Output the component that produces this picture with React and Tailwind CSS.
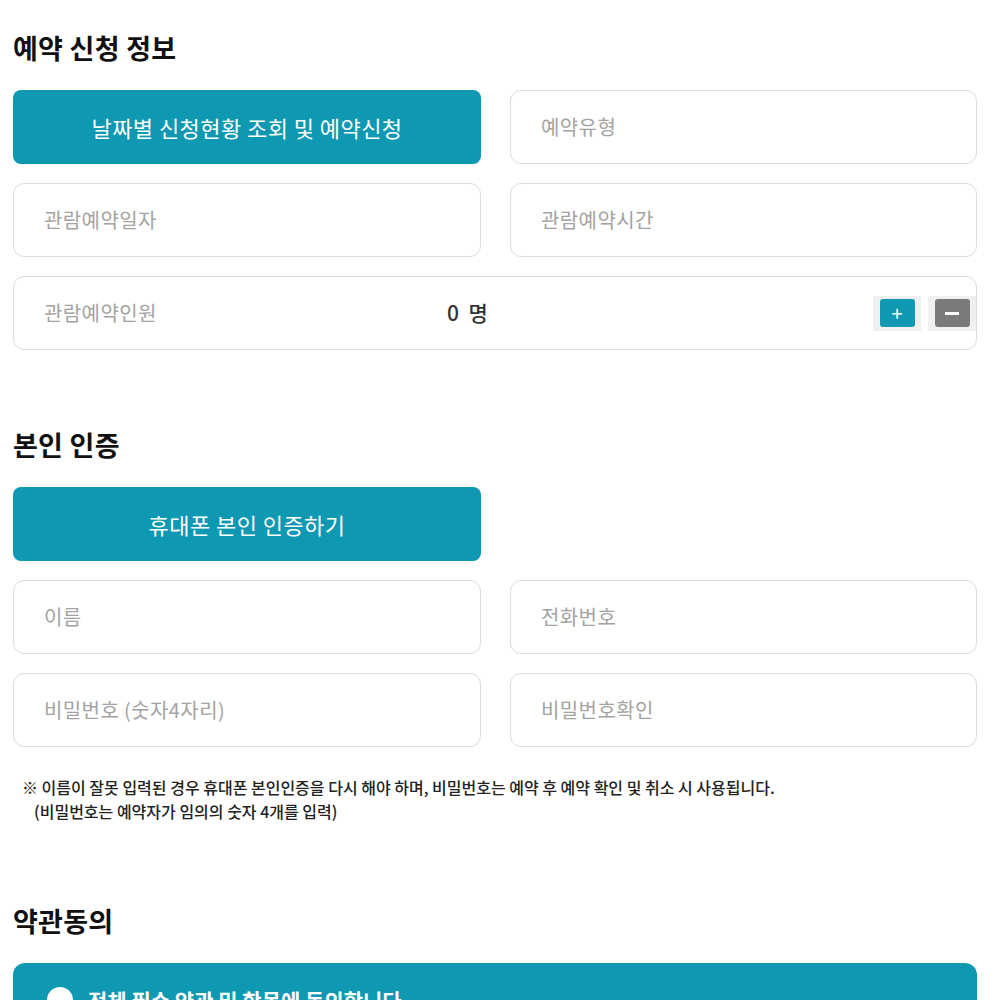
// 예약 신청 폼 — 예약 정보, 본인 인증, 약관 동의 섹션으로 구성.
import { useState } from 'react'

const font = { fontFamily: '"Noto Sans CJK KR", "Noto Sans", sans-serif' }

function Field({ placeholder }) {
  return (
    <div className="flex h-[74px] items-center rounded-[11px] border border-[#dcdcdc] bg-white pl-[30px]">
      <span className="text-[20px] tracking-[0.02em] text-[#a3a3a3]">{placeholder}</span>
    </div>
  )
}

function PrimaryButton({ children }) {
  return (
    <button className="flex h-[74px] items-center justify-center rounded-[8px] bg-[#0e98b2] text-[22px] tracking-[0.02em] text-white">
      {children}
    </button>
  )
}

function SectionTitle({ children, className = '' }) {
  return (
    <h2 className={`text-[27px] font-bold leading-[39px] tracking-[0.01em] text-[#111] ${className}`}>
      {children}
    </h2>
  )
}

export default function App() {
  const [count, setCount] = useState(0)

  return (
    <div style={font} className="min-h-screen bg-white pl-[13px] pr-[23px] pt-[28px]">
      {/* 예약 신청 정보 */}
      <SectionTitle className="mb-[23px]">예약 신청 정보</SectionTitle>
      <div className="grid grid-cols-[468px_467px] gap-x-[29px] gap-y-[19px]">
        <PrimaryButton>날짜별 신청현황 조회 및 예약신청</PrimaryButton>
        <Field placeholder="예약유형" />
        <Field placeholder="관람예약일자" />
        <Field placeholder="관람예약시간" />
        <div className="col-span-2 flex h-[74px] items-center overflow-hidden rounded-[11px] border border-[#dcdcdc] bg-white pl-[30px]">
          <span className="w-[403px] text-[20px] tracking-[0.02em] text-[#a3a3a3]">관람예약인원</span>
          <span className="text-[21px] font-medium text-[#333]">
            {count}&nbsp;&nbsp;명
          </span>
          <div className="ml-auto flex gap-[7px]">
            <div className="flex h-[35px] w-[48px] items-center justify-center bg-[#f0f0f0]">
              <button
                onClick={() => setCount(count + 1)}
                className="flex h-[28px] w-[35px] items-center justify-center rounded-[3px] bg-[#0e98b2] text-[20px] leading-none text-white"
              >
                +
              </button>
            </div>
            <div className="flex h-[35px] w-[48px] items-center justify-center bg-[#f0f0f0]">
              <button
                onClick={() => setCount(Math.max(0, count - 1))}
                className="flex h-[28px] w-[35px] items-center justify-center rounded-[3px] bg-[#7a7a7a]"
              >
                <span className="block h-[3px] w-[14px] bg-white" />
              </button>
            </div>
          </div>
        </div>
      </div>

      {/* 본인 인증 */}
      <SectionTitle className="mb-[23px] mt-[75px]">본인 인증</SectionTitle>
      <div className="grid grid-cols-[468px_467px] gap-x-[29px] gap-y-[19px]">
        <PrimaryButton>휴대폰 본인 인증하기</PrimaryButton>
        <div />
        <Field placeholder="이름" />
        <Field placeholder="전화번호" />
        <Field placeholder="비밀번호 (숫자4자리)" />
        <Field placeholder="비밀번호확인" />
      </div>
      <div className="mt-[28px] pl-[9px] text-[16px] font-medium leading-[24px] text-[#222]">
        <p>※ 이름이 잘못 입력된 경우 휴대폰 본인인증을 다시 해야 하며, 비밀번호는 예약 후 예약 확인 및 취소 시 사용됩니다.</p>
        <p className="pl-[12px]">(비밀번호는 예약자가 임의의 숫자 4개를 입력)</p>
      </div>

      {/* 약관동의 */}
      <SectionTitle className="mb-[23px] mt-[78px]">약관동의</SectionTitle>
      <div className="flex h-[80px] w-[964px] items-start rounded-t-[12px] bg-[#0e98b2] pl-[34px] pt-[23px]">
        <span className="mt-[1px] block h-[26px] w-[26px] rounded-full bg-white" />
        <span className="ml-[15px] text-[21px] font-bold leading-[28px] text-white">
          전체 필수 약관 및 항목에 동의합니다
        </span>
      </div>
    </div>
  )
}
